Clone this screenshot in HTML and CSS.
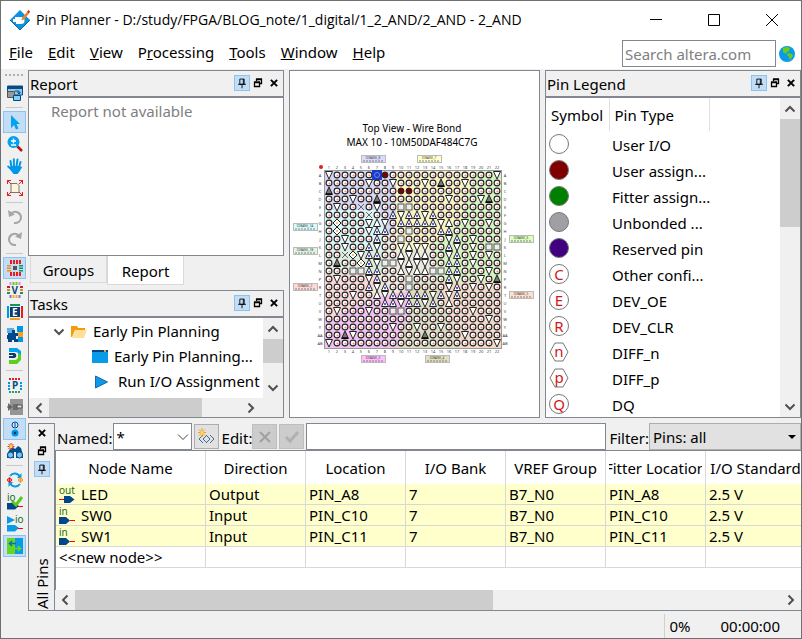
FILE: index.html
```
<!DOCTYPE html>
<html lang="en">
<head>
  <meta charset="UTF-8">
  <meta name="viewport" content="width=device-width, initial-scale=1.0">
  <title>Pin Planner</title>
  <link rel="stylesheet" href="styles.css">
</head>
<body>

<svg class="defs" aria-hidden="true">
  <symbol id="pin" viewBox="0 0 16 16"><path d="M5.5 3.5h5v6h-5zM9.5 3.5v6M3.5 9.5h9M8 10v4" fill="none" stroke="#000"/></symbol>
  <symbol id="float" viewBox="0 0 10 10"><path d="M3.5 3V1.5h5v4H7M3 1h6M1.5 4.5h5v4h-5zM1 4h6" fill="none" stroke="#000" stroke-width="1.3"/></symbol>
  <symbol id="close" viewBox="0 0 8 8"><path d="M1.5 1.5l5 5M6.5 1.5l-5 5" stroke="#000" stroke-width="1.6"/></symbol>
  <symbol id="up" viewBox="0 0 12 12"><path d="M1.5 8.5L6 4l4.5 4.5" fill="none" stroke="#505050" stroke-width="2"/></symbol>
  <symbol id="down" viewBox="0 0 12 12"><path d="M1.5 3.5L6 8l4.5-4.5" fill="none" stroke="#505050" stroke-width="2"/></symbol>
  <symbol id="left" viewBox="0 0 12 12"><path d="M8.5 1.5L4 6l4.5 4.5" fill="none" stroke="#505050" stroke-width="2"/></symbol>
  <symbol id="right" viewBox="0 0 12 12"><path d="M3.5 1.5L8 6l-4.5 4.5" fill="none" stroke="#505050" stroke-width="2"/></symbol>
  <symbol id="node-in" viewBox="0 0 16 16" overflow="visible"><text x="0" y="6" font-size="10" fill="#1a6b1a">in</text><path d="M0 8h7l4 3.5-4 3.5H0z" fill="#00478a"/><path d="M11 11.5h5" stroke="#f00"/></symbol>
  <symbol id="node-out" viewBox="0 0 16 16" overflow="visible"><text x="0" y="6" font-size="10" fill="#1a6b1a">out</text><path d="M5 8h6l4.5 3.5L11 15H5z" fill="#00478a"/><path d="M0 11.5h5" stroke="#f00"/></symbol>
</svg>

<div class="window">
  <header class="titlebar">
    <svg class="logo" viewBox="0 0 20 20">
      <path d="M10 0l10 10-10 10L0 10z" fill="#0b93e0"/>
      <path d="M20 10L10 20 0 10" fill="none" stroke="#0667a8"/>
      <path d="M5 7h6a3.500 3.500 0 010 7H6v-2H3V9h2z" fill="#fff"/>
      <path d="M12 8l5-6 2 1.500-5 6-2.500 1z" fill="#f58220"/><path d="M17 2l1.500-2L20 1.500 19 3.500z" fill="#e02020"/>
    </svg>
    <h1>Pin Planner - D:/study/FPGA/BLOG_note/1_digital/1_2_AND/2_AND - 2_AND</h1>
    <div class="win-buttons">
      <button aria-label="Minimize"><svg viewBox="0 0 12 12"><path d="M0 5.5h12" stroke="#000"/></svg></button>
      <button aria-label="Maximize"><svg viewBox="0 0 12 12"><path d="M.5.5h11v11H.5z" fill="none" stroke="#000"/></svg></button>
      <button aria-label="Close window"><svg viewBox="0 0 12 12"><path d="M0 0l12 12M12 0L0 12" stroke="#000"/></svg></button>
    </div>
  </header>

  <div class="menubar">
    <nav>
      <a href="#"><u>F</u>ile</a>
      <a href="#"><u>E</u>dit</a>
      <a href="#"><u>V</u>iew</a>
      <a href="#">P<u>r</u>ocessing</a>
      <a href="#"><u>T</u>ools</a>
      <a href="#"><u>W</u>indow</a>
      <a href="#"><u>H</u>elp</a>
    </nav>
    <div class="search">
      <input type="text" placeholder="Search altera.com" aria-label="Search altera.com">
      <button aria-label="Go"><svg viewBox="0 0 16 16"><circle cx="8" cy="8" r="8" fill="#0a9be8"/><path d="M4 2l4-1 3 1-1 3-2 1-1 2-3-2zM9 7l4 1 1 2-3 4-1-3-2-2z" fill="#6ccc1c"/></svg></button>
    </div>
  </div>

  <div class="work">
    <div class="toolbar">
      <div class="grip"></div>
      <button aria-label="Detach window"><svg viewBox="0 0 16 16"><path d="M.5 1h15v9H.5z" fill="#8fc7ee" stroke="#0a4a80"/><path d="M0 1h16v3H0z" fill="#0a4a80"/><path d="M.5 6.5h7v6h-7z" fill="#999" stroke="#555"/><path d="M6.5 10.5h7v5h-7z" fill="#7fd0ff" stroke="#0a4a80"/><path d="M8 6h4v2.5M10.5 7l1.500 2 1.500-2" fill="none" stroke="#0a4a80"/></svg></button>
      <hr>
      <button class="on" aria-label="Selection tool"><svg viewBox="0 0 16 16"><path d="M4 1v13l3-3 2 4.5 2.500-1L9.500 10H13z" fill="#00a2f2"/></svg></button>
      <button aria-label="Zoom tool"><svg viewBox="0 0 16 16"><path d="M10 10l5 5" stroke="#b81414" stroke-width="2.5"/><circle cx="6.500" cy="6" r="6" fill="#00a2f2"/><path d="M4 5h5M6.500 2.500v5M4 9h5" stroke="#fff" stroke-width="1.3"/></svg></button>
      <button aria-label="Hand tool"><svg viewBox="0 0 16 16"><path d="M4.500 9.500L3.500 3M7 8.500L6.800 1.200M9.500 8.500l1-7M12 9.500l1.500-5.500M5 12L1.200 8.500" stroke="#0096e8" stroke-width="2" stroke-linecap="round"/><path d="M3.500 8h9.500l1 1 1.500-.5-3 5-2 2.500H6.500L3.500 12z" fill="#0096e8"/></svg></button>
      <button aria-label="Fit in window"><svg viewBox="0 0 16 16"><path d="M4 3.500h6l2 2v7H4z" fill="#fff6d8" stroke="#777"/><path d="M0 0l4 4M16 0l-4 4M0 16l4-4M16 16l-4-4M.5 4V.5H4M12 .5h3.500V4M.5 12v3.500H4M12 15.500h3.500V12" fill="none" stroke="#e81c1c"/></svg></button>
      <hr>
      <button aria-label="Undo"><svg viewBox="0 0 16 16"><path d="M4 4.500c5-4 10 0 10 4 0 3.500-3 6-7 5.500" fill="none" stroke="#a5a5a5" stroke-width="2"/><path d="M1 1l1 7 6-2.500z" fill="#a5a5a5"/></svg></button>
      <button aria-label="Redo"><svg viewBox="0 0 16 16"><path d="M12 4.500c-5-4-10 0-10 4 0 3.500 3 6 7 5.500" fill="none" stroke="#a5a5a5" stroke-width="2"/><path d="M15 1l-1 7-6-2.500z" fill="#a5a5a5"/></svg></button>
      <hr>
      <button class="on" aria-label="Package view"><svg viewBox="0 0 16 16"><path d="M3 0h2v4H3zM6 0h2v4H6zM9 0h2v4H9zM12 0h2v4h-2z" fill="#e81c1c"/><path d="M3 12h2v4H3zM6 12h2v4H6zM9 12h2v4H9zM12 12h2v4h-2z" fill="#e81c1c"/><path d="M0 5h4v1.500H0zM0 7.500h4V9H0zM0 10h4v1.500H0z" fill="#f28c1c"/><path d="M12 5h4v1.500h-4zM12 7.500h4V9h-4zM12 10h4v1.500h-4z" fill="#12965a"/><path d="M6 6h4v4H6z" fill="#555"/></svg></button>
      <button aria-label="VREF view"><svg viewBox="0 0 16 16"><path d="M3.500 0v3M12.500 0v3" stroke="#c79ae0" stroke-width="2"/><path d="M6.500 0v3M9.500 0v3" stroke="#6ccc1c" stroke-width="2"/><path d="M3.500 13v3M12.500 13v3" stroke="#9a6ad0" stroke-width="2"/><path d="M6.500 13v3M9.500 13v3" stroke="#f0b028" stroke-width="2"/><path d="M0 5h3M13 5h3" stroke="#c01c3c" stroke-width="2"/><path d="M0 8h3M13 8h3" stroke="#e08c1c" stroke-width="2"/><path d="M0 11h3M13 11h3" stroke="#12965a" stroke-width="2"/><text x="4.500" y="12" font-size="10" font-weight="700" fill="#0a4a80">V</text></svg></button>
      <button aria-label="Edge view"><svg viewBox="0 0 16 16"><path d="M3 0h10v2H3z" fill="#12965a"/><path d="M3 14h10v2H3z" fill="#f5a01c"/><path d="M0 2h2v12H0z" fill="#0096e8"/><path d="M14 2h2v12h-2z" fill="#e81c1c"/><path d="M3 3h10v10H3z" fill="#0a3a70"/><text x="5" y="12" font-size="10" font-weight="700" fill="#fff">E</text></svg></button>
      <button aria-label="Resource view"><svg viewBox="0 0 16 16"><path d="M0 2h7v5H0z" fill="#5ab0e8"/><path d="M10 0h6v6h-6zM11 11h5v5h-5z" fill="#0096e8"/><path d="M11 6h5v5h-5z" fill="#f5a01c"/><path d="M1 7h4V4h3v3h3v3H9v3h2v3H7v-2H5v2H1v-3H0V9h1z" fill="#00478a"/></svg></button>
      <button aria-label="Differential pair"><svg viewBox="0 0 16 16"><path d="M2 0h8l4 3v5h-3V5L9 4H2z" fill="#00a2f2"/><path d="M2 5h5c3 0 3 5 0 5H2V8h4V7H2z" fill="#0a3a70"/><path d="M2 12h7l2-2V5l3 2v5l-4 4H2z" fill="#5cd01c"/></svg></button>
      <hr>
      <button aria-label="Pin legend"><svg viewBox="0 0 16 16"><path d="M2 2h12" stroke="#e02020" stroke-width="2" stroke-dasharray="2 1"/><path d="M2 5v9M14 5v9" stroke="#0096e8" stroke-width="2" stroke-dasharray="2 1"/><path d="M2 15h12" stroke="#2aa05a" stroke-width="2" stroke-dasharray="2 1"/><text x="5" y="12" font-size="10" font-weight="700" fill="#0a4a80">P</text></svg></button>
      <button aria-label="Pad view"><svg viewBox="0 0 16 16"><path d="M3 0h13v16H3z" fill="#959595"/><path d="M1 4l5 4-5 4zM6 5h5v6H6z" fill="#6e6e6e"/><path d="M10 6h5v3h-5z" fill="#ddd" stroke="#555"/><path d="M0 8h4" stroke="#555"/></svg></button>
      <button class="on" aria-label="Pin properties"><svg viewBox="0 0 16 16"><circle cx="8" cy="4" r="3" fill="#d8ecfb" stroke="#00478a"/><path d="M8 2v4" stroke="#00478a"/><circle cx="8" cy="12" r="3.500" fill="#0096e8"/><circle cx="8" cy="12" r="1.300" fill="#003a70"/></svg></button>
      <button aria-label="Find"><svg viewBox="0 0 16 16"><path d="M3 6l3-2 2 2 3-3 3 2 2 7v3H9V9H7v6H0v-4z" fill="#00508e"/><circle cx="3.500" cy="12" r="3" fill="#7cc4f0" stroke="#00508e"/><circle cx="12.500" cy="12" r="3" fill="#7cc4f0" stroke="#00508e"/><path d="M4 0v7M.5 3.500h7M1.500 1l5 5M6.500 1l-5 5" stroke="#e82c1c"/><circle cx="4" cy="3.500" r="1.500" fill="#ffe040"/></svg></button>
      <hr>
      <button aria-label="Refresh"><svg viewBox="0 0 16 16"><path d="M3 4c3-4 8-3 10 1M13 12c-3 4-8 3-10-1" fill="none" stroke="#0a9be8" stroke-width="2"/><path d="M14.500 1v5H10zM1.500 15v-5H6z" fill="#0a9be8"/><circle cx="2.500" cy="8" r="2" fill="#fff" stroke="#e81c1c"/><path d="M0 8h5M2.500 5.500v5" stroke="#e81c1c"/><circle cx="13.500" cy="8" r="2" fill="#fff" stroke="#f29a1c"/><path d="M11 8h5M13.500 5.500v5" stroke="#f29a1c"/></svg></button>
      <button aria-label="I/O assignment check"><svg viewBox="0 0 16 16"><text x="0" y="7" font-size="10" fill="#1a6b1a">io</text><path d="M0 9h8l4 3-4 3.500H0z" fill="#00478a"/><path d="M11 12.500h5" stroke="#f00"/><path d="M5 7l4 4 6-8" fill="none" stroke="#5cc81c" stroke-width="3"/></svg></button>
      <button aria-label="Run I/O analysis"><svg viewBox="0 0 16 16"><path d="M0 0l8 4-8 4zM0 9h8l4 3-4 3.500H0z" fill="#0a9be8"/><text x="8" y="7" font-size="10" fill="#1a6b1a">io</text><path d="M11 12.500h5" stroke="#f00"/></svg></button>
      <button class="on" aria-label="Swap view"><svg viewBox="0 0 16 16"><path d="M0 0h8v16H0z" fill="#66d81c"/><path d="M8 0h8v16H8z" fill="#0a9be8"/><path d="M9 5.500H3M5 3L2.500 5.500 5 8" fill="none" stroke="#0a70b0" stroke-width="1.600"/><path d="M7 10.500h6M11 8l2.500 2.500L11 13" fill="none" stroke="#66d81c" stroke-width="1.600"/></svg></button>
    </div>

    <div class="content">
      <div class="docks">
        <div class="side">
          <section class="dock report">
            <div class="dock-title">
              <h2>Report</h2>
              <button class="on" aria-label="Pin report"><svg><use href="#pin"/></svg></button>
              <button aria-label="Float report"><svg><use href="#float"/></svg></button>
              <button aria-label="Close report"><svg><use href="#close"/></svg></button>
            </div>
            <p class="empty">Report not available</p>
          </section>
          <div class="tabs">
            <button>Groups</button>
            <button class="active">Report</button>
          </div>
          <section class="dock tasks">
            <div class="dock-title">
              <h2>Tasks</h2>
              <button class="on" aria-label="Pin tasks"><svg><use href="#pin"/></svg></button>
              <button aria-label="Float tasks"><svg><use href="#float"/></svg></button>
              <button aria-label="Close tasks"><svg><use href="#close"/></svg></button>
            </div>
            <div class="tree-area">
              <ul class="tree">
                <li class="level1"><svg class="small"><use href="#down"/></svg><svg viewBox="0 0 16 16"><path d="M0 2h6l1 2h7v2H4L1 13H0z" fill="#f59a0c"/><path d="M4 6h12l-3 8H1z" fill="#ffe09a"/></svg>Early Pin Planning</li>
                <li class="level2"><svg viewBox="0 0 16 16"><path d="M0 1h16v13H0z" fill="#0a9be8"/><path d="M0 1h16v2H0z" fill="#00478a"/><path d="M12 1h2v2h-2z" fill="#f5a01c"/></svg>Early Pin Planning...</li>
                <li class="level3"><svg viewBox="0 0 16 16"><path d="M2.500 2l12 6-12 6z" fill="#0a9be8" stroke="#2464b0"/></svg>Run I/O Assignment Analysis</li>
              </ul>
              <div class="vscroll">
                <button aria-label="Scroll up"><svg><use href="#up"/></svg></button>
                <div class="thumb"></div>
                <button aria-label="Scroll down"><svg><use href="#down"/></svg></button>
              </div>
            </div>
            <div class="hscroll tasks-scroll">
              <button aria-label="Scroll left"><svg><use href="#left"/></svg></button>
              <div class="thumb"></div>
              <button aria-label="Scroll right"><svg><use href="#right"/></svg></button>
            </div>
          </section>
        </div>

        <section class="device">
          <svg id="package" viewBox="0 0 249 346" role="img" aria-label="Package top view"></svg>
        </section>

        <section class="dock legend">
          <div class="dock-title">
            <h2>Pin Legend</h2>
            <button class="on" aria-label="Pin legend dock"><svg><use href="#pin"/></svg></button>
            <button aria-label="Float legend"><svg><use href="#float"/></svg></button>
            <button aria-label="Close legend"><svg><use href="#close"/></svg></button>
          </div>
          <div class="legend-area">
            <div class="legend-list">
              <table>
                <thead><tr><th>Symbol</th><th>Pin Type</th><th></th></tr></thead>
                <tbody>
                  <tr><td><i class="sym"></i></td><td>User I/O</td></tr>
                  <tr><td><i class="sym user"></i></td><td>User assign...</td></tr>
                  <tr><td><i class="sym fitter"></i></td><td>Fitter assign...</td></tr>
                  <tr><td><i class="sym unbonded"></i></td><td>Unbonded ...</td></tr>
                  <tr><td><i class="sym reserved"></i></td><td>Reserved pin</td></tr>
                  <tr><td><i class="sym">C</i></td><td>Other confi...</td></tr>
                  <tr><td><i class="sym">E</i></td><td>DEV_OE</td></tr>
                  <tr><td><i class="sym">R</i></td><td>DEV_CLR</td></tr>
                  <tr><td><svg class="hex" viewBox="0 0 20 20"><path d="M1 10l5-9h8l5 9-5 9H6z" fill="#fff" stroke="#777"/><text x="10" y="15">n</text></svg></td><td>DIFF_n</td></tr>
                  <tr><td><svg class="hex" viewBox="0 0 20 20"><path d="M1 10l5-9h8l5 9-5 9H6z" fill="#fff" stroke="#777"/><text x="10" y="15">p</text></svg></td><td>DIFF_p</td></tr>
                  <tr><td><i class="sym">Q</i></td><td>DQ</td></tr>
                </tbody>
              </table>
            </div>
            <div class="vscroll legend-scroll">
              <button aria-label="Scroll up"><svg><use href="#up"/></svg></button>
              <div class="thumb"></div>
              <button aria-label="Scroll down"><svg><use href="#down"/></svg></button>
            </div>
          </div>
        </section>
      </div>

      <section class="pins">
        <div class="pins-title">
          <button aria-label="Close all pins"><svg><use href="#close"/></svg></button>
          <button aria-label="Float all pins"><svg><use href="#float"/></svg></button>
          <button class="on" aria-label="Pin all pins"><svg><use href="#pin"/></svg></button>
          <h2>All Pins</h2>
        </div>
        <div class="pins-body">
          <div class="filterbar">
            <label for="named">Named:</label>
            <div class="named">
              <select id="named"><option>*</option></select>
              <svg viewBox="0 0 12 12"><path d="M1 3.500l5 5 5-5" fill="none" stroke="#444"/></svg>
            </div>
            <button aria-label="Node finder"><svg viewBox="0 0 18 18"><path d="M6 7l-4 4 4 4M10 7l-4 4 4 4M9 7l4 4-4 4M13 7l4 4-4 4" fill="none" stroke="#456a8c"/><path d="M5 0v9M1 4.500h8M2 1.500l6 6M8 1.500l-6 6" stroke="#f5a01c"/><circle cx="5" cy="4.500" r="1.500" fill="#ffe040"/></svg></button>
            <label for="edit">Edit:</label>
            <button class="off" aria-label="Cancel edit"><svg viewBox="0 0 18 18"><path d="M4 4l10 10M14 4L4 14" stroke="#a0a0a0" stroke-width="2"/></svg></button>
            <button class="off" aria-label="Accept edit"><svg viewBox="0 0 18 18"><path d="M3 9l4 4 8-9" fill="none" stroke="#b0b0b0" stroke-width="3"/></svg></button>
            <input id="edit" type="text">
            <label for="filter">Filter:</label>
            <div class="filter">
              <select id="filter"><option>Pins: all</option></select>
              <svg viewBox="0 0 12 12"><path d="M2 4h8L6 8z"/></svg>
            </div>
          </div>
          <div class="grid">
            <table>
              <thead>
                <tr><th><span>Node Name</span></th><th><span>Direction</span></th><th><span>Location</span></th><th><span>I/O Bank</span></th><th><span>VREF Group</span></th><th><span>Fitter Location</span></th><th><span>I/O Standard</span></th></tr>
              </thead>
              <tbody>
                <tr><td><svg><use href="#node-out"/></svg>LED</td><td>Output</td><td>PIN_A8</td><td>7</td><td>B7_N0</td><td>PIN_A8</td><td>2.5 V</td></tr>
                <tr><td><svg><use href="#node-in"/></svg>SW0</td><td>Input</td><td>PIN_C10</td><td>7</td><td>B7_N0</td><td>PIN_C10</td><td>2.5 V</td></tr>
                <tr><td><svg><use href="#node-in"/></svg>SW1</td><td>Input</td><td>PIN_C11</td><td>7</td><td>B7_N0</td><td>PIN_C11</td><td>2.5 V</td></tr>
                <tr class="new"><td>&lt;&lt;new node&gt;&gt;</td><td></td><td></td><td></td><td></td><td></td><td></td></tr>
              </tbody>
            </table>
          </div>
          <div class="hscroll pins-scroll">
            <button aria-label="Scroll left"><svg><use href="#left"/></svg></button>
            <div class="thumb"></div>
            <button aria-label="Scroll right"><svg><use href="#right"/></svg></button>
          </div>
        </div>
      </section>
    </div>
  </div>

  <footer class="statusbar">
    <span>0%</span>
    <span>00:00:00</span>
  </footer>
</div>

<script src="package.js"></script>
</body>
</html>
```
FILE: styles.css
```
* { box-sizing: border-box; }
body {
  margin: 0;
  font-family: "Noto Sans", "Open Sans", sans-serif;
  font-size: 15px;
  color: #000;
}
button {
  font: inherit;
  padding: 0;
  border: 0;
  background: none;
}
input, select {
  font: inherit;
  color: #000;
  border: 1px solid #828790;
  border-radius: 0;
  background: #fff;
}
h1, h2, p, ul { margin: 0; font-weight: normal; }
svg { display: block; flex: none; }
.defs { display: none; }

.window {
  display: flex;
  flex-direction: column;
  height: 100vh;
  border: 1px solid #707070;
  background: #f0f0f0;
  overflow: hidden;
}
.titlebar {
  display: flex;
  align-items: center;
  height: 37px;
  padding-left: 9px;
  background: #fff;
}
.logo { width: 20px; height: 20px; }
h1 {
  flex: 1;
  margin-left: 6px;
  font-family: "Open Sans", sans-serif;
  font-size: 14px;
  white-space: nowrap;
}
.win-buttons { display: flex; }
.win-buttons button {
  display: grid;
  place-items: center;
  width: 58px;
  height: 36px;
}
.win-buttons svg { width: 12px; height: 12px; }

.menubar {
  display: flex;
  justify-content: space-between;
  height: 31px;
  padding-left: 8px;
  background: #fff;
}
nav { display: flex; gap: 15px; line-height: 28px; }
nav a { color: #000; text-decoration: none; }
.search { display: flex; align-items: center; gap: 3px; padding-right: 6px; }
.search input { width: 154px; height: 27px; padding: 2px; }
.search input::placeholder { color: #808080; }
.search svg { width: 16px; height: 16px; }

.work { display: flex; flex: 1; min-height: 0; }
.toolbar {
  width: 27px;
  padding: 5px 2px 0;
}
.grip {
  height: 2px;
  margin: 0 2px 6px;
  background: repeating-linear-gradient(90deg, #b0b0b0 0 2px, transparent 2px 4px);
}
.toolbar button {
  display: grid;
  place-items: center;
  width: 23px;
  height: 22px;
}
.toolbar svg { width: 16px; height: 16px; overflow: visible; }
.toolbar hr {
  height: 1px;
  margin: 3px;
  border: 0;
  background: #c8c8c8;
}
.on, .toolbar .on {
  background: #c2ddf5;
  border: 1px solid #8cc4f0;
}

.content {
  display: flex;
  flex-direction: column;
  flex: 1;
  min-width: 0;
  padding-top: 1px;
}
.docks {
  display: grid;
  grid-template-columns: 256px 1fr 256px;
  gap: 5px;
  flex: 1;
  min-height: 0;
}
.side { display: flex; flex-direction: column; min-height: 0; }
.dock {
  display: flex;
  flex-direction: column;
  min-height: 0;
  border: 1px solid #828790;
  background: #fff;
}
.dock-title {
  display: flex;
  align-items: center;
  height: 27px;
  flex: none;
  padding: 0 1px 2px;
  border-bottom: 2px solid #828790;
  background: #f0f0f0;
}
h2 { flex: 1; font-size: 15px; }
.dock-title h2 { padding-top: 3px; }
.dock-title button, .pins-title button {
  display: grid;
  place-items: center;
  width: 16px;
  height: 16px;
}
.dock-title svg, .pins-title svg { width: 10px; height: 10px; }
.dock-title .on svg, .pins-title .on svg { width: 14px; height: 14px; }
.report { flex: 1; }
.empty { padding: 3px 22px; color: #808080; }
.tabs {
  display: flex;
  align-items: flex-start;
  height: 34px;
  padding-left: 2px;
}
.tabs button {
  width: 77px;
  height: 27px;
  padding-top: 2px;
  line-height: 24px;
  border: 1px solid #d9d9d9;
  border-top: 0;
}
.tabs .active { height: 29px; background: #fff; }
.tasks { height: 128px; }
.tree-area { display: flex; flex: 1; min-height: 0; }
.tree {
  flex: 1;
  overflow: hidden;
  padding: 1px 0 0;
  list-style: none;
  line-height: 25px;
  white-space: nowrap;
}
.tree li { display: flex; align-items: center; gap: 6px; }
.tree svg { width: 16px; height: 16px; }
.tree .small { width: 12px; height: 12px; }
.level1 { padding-left: 24px; }
.level2 { padding-left: 63px; }
.level3 { padding-left: 64px; }
.tree .level3 { gap: 9px; }

.vscroll, .hscroll {
  display: flex;
  flex: none;
  background: #f0f0f0;
}
.vscroll { flex-direction: column; width: 20px; }
.hscroll { height: 19px; }
.vscroll button, .hscroll button {
  display: grid;
  place-items: center;
  flex: none;
  width: 20px;
  height: 19px;
}
.vscroll button { width: 19px; height: 21px; }
.vscroll svg, .hscroll svg { width: 12px; height: 12px; }
.thumb { background: #cdcdcd; }
.vscroll .thumb { height: 30%; }
.vscroll button:last-child { margin-top: auto; }
.hscroll button:last-child { margin-left: auto; }
.tasks-scroll { padding-right: 22px; }
.tasks-scroll .thumb { width: 66%; }
.legend-scroll .thumb { height: 34%; }

.device {
  border: 1px solid #828790;
  background: #fff;
  min-width: 0;
  min-height: 0;
}
.device svg { width: 100%; height: 100%; }
.device text { text-anchor: middle; }

.legend-area { display: flex; flex: 1; min-height: 0; }
.legend-list { flex: 1; overflow: hidden; }
.legend table { border-collapse: collapse; width: 100%; table-layout: fixed; }
.legend th {
  height: 33px;
  padding: 0 5px;
  border-right: 1px solid #e0e0e0;
  font-weight: normal;
  text-align: left;
}
.legend th:first-child { width: 63px; }
.legend th:nth-child(2) { width: 100px; }
.legend th:last-child { border: 0; }
.legend td { height: 26px; padding: 0 3px; white-space: nowrap; line-height: 24px; }
.legend td:last-child { padding-top: 2px; }
.sym {
  display: block;
  width: 20px;
  height: 20px;
  border: 1px solid #777;
  border-radius: 50%;
  color: #d01818;
  font-style: normal;
  line-height: 18px;
  text-align: center;
}
.user { background: #800000; }
.fitter { background: #008000; }
.unbonded { background: #a0a0a4; }
.reserved { background: #400080; }
.hex { width: 20px; height: 20px; }
.hex text { fill: #d01818; text-anchor: middle; }

.pins {
  display: flex;
  height: 188px;
  flex: none;
  margin-top: 5px;
  border-bottom: 1px solid #828790;
}
.pins-title {
  display: flex;
  flex-direction: column;
  align-items: center;
  gap: 2px;
  width: 27px;
  padding: 1px 0;
  border: 1px solid #828790;
  border-bottom: 0;
}
.pins-title h2 {
  writing-mode: vertical-rl;
  transform: rotate(180deg);
}
.pins-body { display: flex; flex-direction: column; flex: 1; min-width: 0; }
.filterbar {
  display: flex;
  align-items: center;
  height: 28px;
  padding-left: 2px;
  border-bottom: 1px solid #828790;
}
.filterbar button {
  display: grid;
  place-items: center;
  width: 25px;
  height: 25px;
  border: 1px solid #adadad;
  background: #e1e1e1;
}
.filterbar svg { width: 18px; height: 18px; }
.filterbar .off { background: #ccc; border-color: #bfbfbf; margin-right: 2px; }
.filterbar label { margin: 3px 0 0 3px; }
.filterbar label:first-child { margin-left: 0; }
.filterbar input { flex: 1; min-width: 0; height: 27px; }
.named, .filter { position: relative; }
.named { width: 79px; margin-right: 2px; }
.filter { width: 152px; }
.named select, .filter select {
  width: 100%;
  height: 27px;
  padding: 0 3px;
  appearance: none;
}
.filter select { background: #e1e1e1; border-color: #adadad; }
.filterbar div svg {
  position: absolute;
  top: 8px;
  right: 3px;
  width: 12px;
  height: 12px;
  pointer-events: none;
}
.grid {
  flex: 1;
  overflow: hidden;
  border-left: 1px solid #828790;
  background: #fff;
}
.grid table {
  width: 750px;
  table-layout: fixed;
  border-collapse: separate;
  border-spacing: 0;
}
.grid th, .grid td {
  padding: 0 3px;
  border-right: 1px solid #d8d8d8;
  white-space: nowrap;
}
.grid th { width: 100px; height: 33px; font-weight: normal; overflow: hidden; }
.grid th:first-child { width: 150px; }
.grid th span { display: flex; justify-content: center; overflow: hidden; }
.grid td {
  height: 21px;
  padding-top: 1px;
  border-bottom: 1px solid #d8d8d8;
  background: #ffffcc;
  line-height: 19px;
}
.grid .new td { background: #fff; }
.grid td svg {
  display: inline-block;
  width: 16px;
  height: 16px;
  margin-right: 6px;
  overflow: visible;
  vertical-align: middle;
}
.pins-scroll { height: 20px; }
.pins-scroll .thumb { width: 56%; }

.statusbar {
  display: flex;
  justify-content: flex-end;
  align-items: center;
  height: 27px;
  flex: none;
  padding: 3px 21px 0 0;
}
.statusbar span + span { margin-left: 30px; }
.statusbar span:first-child {
  padding-left: 4px;
  border-left: 1px solid #d0d0d0;
  line-height: 24px;
}
```
FILE: package.js
```
// o user i/o, v/^ power and ground, b differential, s/x/d config, k locked, m assigned, S selected
const rows = {
  A: "voooooSmooo" + "oooooooooov",
  B: "ooooovoovoo" + "ovokoovoooo",
  C: "koooooooomm" + "ooooooooooo",
  D: "ooovookoooo" + "oooovooovko",
  E: "ovooxovooss" + "ooooooooooo",
  F: "oooooxoobvb" + "bvboooooooo",
  G: "odooov^vobb" + "bbbv^ovoovo",
  H: "odooovbboos" + "ooobboooooo",
  J: "oovooobooso" + "oooovbovooo",
  K: "oovoobvoov^" + "vvoobvovoss",
  L: "ooxdvbboo^v" + "^^oovbovovo",
  M: "okoodbvssv^" + "vvoobbovooo",
  N: "ooossbboo^v" + "^^ssbbooovo",
  P: "ovooovbooos" + "oooobvoovok",
  R: "ooooobvboos" + "oooovbovovo",
  T: "ooovoo^vbbb" + "bbvbvbooooo",
  U: "ooooooobbvb" + "bvbo^oooooo",
  V: "ovooovoosso" + "ooooooovooo",
  W: "ooooooooooo" + "ooooooooovo",
  Y: "oooooooovoo" + "voovooooooo",
  AA: "ookvooooooo" + "okoooovoooo",
  AB: "voooooooooo" + "oooooooooov"
};

const banks = [
  ["8", 71, 84, "#dcdcfa"],
  ["7", 127, 84, "#ffffc8"],
  ["1A", 3, 152, "#d4fafa"],
  ["1B", 3, 176, "#e0f4e4"],
  ["2", 3, 212, "#ffd8d8"],
  ["6", 219, 164, "#dcffc0"],
  ["5", 219, 220, "#fce0cc"],
  ["4", 135, 284, "#e0e0c0"],
  ["3", 71, 284, "#ffc0ff"]
];

const areas = [
  ["34,99 122,99 122,147 98,163 34,147", "#d6d6f2"],
  ["106,99 186,99 178,179 106,179", "#f7f3c4"],
  ["186,99 211,99 211,219 146,219 146,170 170,150", "#d6f2c0"],
  ["34,139 90,139 98,187 34,179", "#daf6f4"],
  ["34,179 98,179 90,203 34,203", "#dcecdf"],
  ["34,203 90,203 74,235 34,251", "#f8d8d4"],
  ["34,251 82,227 122,219 122,277 34,277", "#f2c0f2"],
  ["114,211 154,211 178,277 106,277 122,235", "#dcdcc0"],
  ["146,211 211,211 211,277 170,277", "#f2d9c8"]
];

let out = '<g font-size="10"><text x="122" y="61">Top View - Wire Bond</text>' +
  '<text x="122" y="75">MAX 10 - 10M50DAF484C7G</text></g>';

banks.forEach(([name, x, y, color]) => {
  out += `<rect x="${x}.5" y="${y}.5" width="24" height="7" fill="${color}" stroke="#bbb"/>` +
    `<text x="${x + 12}" y="${y + 4}" font-size="3" fill="#444">IOBANK_${name}</text>` +
    `<path d="M${x + 2} ${y + 6}h21" stroke="#555" stroke-dasharray="2 1" stroke-width=".7"/>`;
});

out += '<rect x="34" y="99" width="177" height="178" fill="#ece8dc"/>';
areas.forEach(([points, color]) => {
  out += `<polygon points="${points}" fill="${color}"/>`;
});
out += '<rect x="34.5" y="99.5" width="177" height="178" fill="none" stroke="#999"/>' +
  '<circle cx="31" cy="96" r="2" fill="#e81c24"/>';

function pin(type, x, y) {
  const up = `M${x} ${y - 4}l3.5 7.5h-7z`;
  const down = `M${x} ${y + 4}l3.5-7.5h-7z`;
  const shape = (d, fill) => `<path d="${d}" fill="${fill}" stroke="#222"/>`;
  switch (type) {
    case "v": return shape(down, "#fff");
    case "^": return shape(up, "#fff");
    case "b": return shape(up, "#fff") + `<circle cx="${x}" cy="${y + 1}" r="1.2" fill="#5a5ae0"/>`;
    case "k": return shape(up, "#777") + `<path d="M${x - 3} ${y + 3}h6" stroke="#000" stroke-width="1.5"/>`;
    case "s": return `<rect x="${x - 3}" y="${y - 3}" width="6" height="6" fill="#eee" stroke="#555"/>`;
    case "x": return `<path d="M${x - 3} ${y - 3}l6 6m0-6l-6 6" stroke="#444" stroke-width=".8"/>`;
    case "d": return shape(`M${x} ${y - 4}l4 4-4 4-4-4z`, "#fff") + `<circle cx="${x}" cy="${y}" r="1" fill="#f0b040"/>`;
    case "S": return `<rect x="${x - 5}" y="${y - 5}" width="10" height="10" fill="#1c3cc8"/><circle cx="${x}" cy="${y}" r="2.5" fill="none" stroke="#6a84e8"/>`;
    case "m": return `<circle cx="${x}" cy="${y}" r="3" fill="#800000" stroke="#222"/>`;
  }
  return `<circle cx="${x}" cy="${y}" r="2.9" fill="#fff" stroke="#222" stroke-width="1.1"/>` +
    `<circle cx="${x + 0.5}" cy="${y + 0.5}" r="1.1" fill="#f08c8c"/>`;
}

Object.entries(rows).forEach(([name, pins], r) => {
  const y = 104 + r * 8;
  [...pins].forEach((type, c) => {
    out += pin(type, 39 + c * 8, y);
  });
  out += `<text x="30" y="${y + 2}" font-size="4" fill="#444">${name}</text>` +
    `<text x="215" y="${y + 2}" font-size="4" fill="#444">${name}</text>`;
});
for (let c = 0; c < 22; c++) {
  const x = 39 + c * 8;
  out += `<text x="${x}" y="98" font-size="4" fill="#444">${c + 1}</text>` +
    `<text x="${x}" y="282" font-size="4" fill="#444">${c + 1}</text>`;
}

document.getElementById("package").innerHTML = out;
```
